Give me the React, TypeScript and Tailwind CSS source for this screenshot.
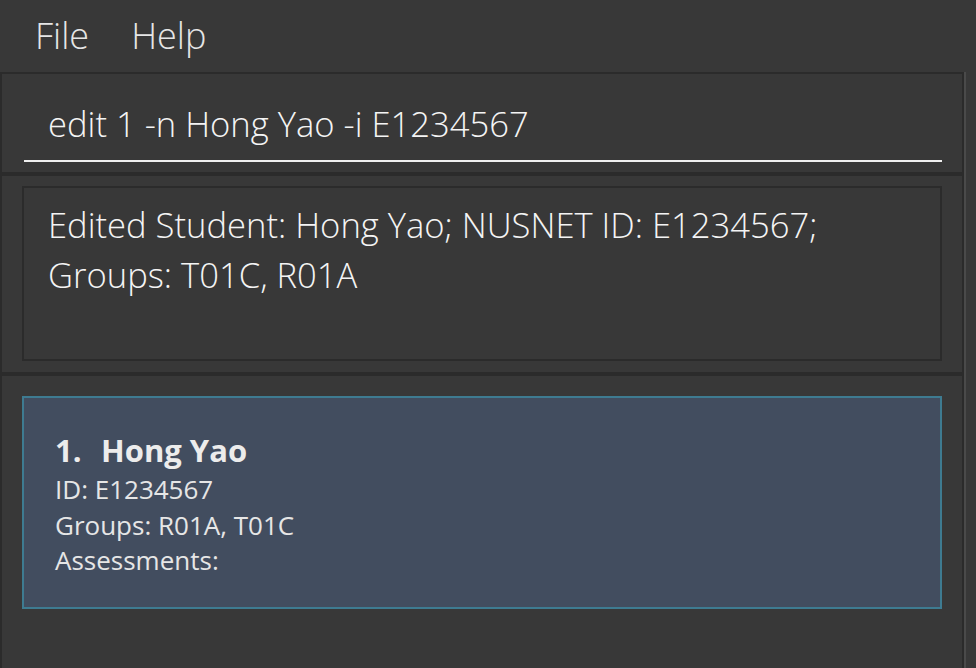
export default function App() {
  return (
    <div
      className="w-[976px] h-[668px] bg-[#383838] flex flex-col overflow-hidden text-white"
      style={{ fontFamily: '"Open Sans", "Noto Sans", sans-serif' }}
    >
      {/* Menu bar */}
      <div className="h-[72px] flex items-center gap-[42px] pl-[35px] text-[36px] font-light text-[#e6e6e6]">
        <span>File</span>
        <span>Help</span>
      </div>

      <div className="flex-1 flex">
        <div className="w-[962px] flex flex-col border-l-2 border-t-2 border-[#2b2b2b]">
          {/* Command box */}
          <div className="h-[98px] px-[20px] pt-[10px]">
            <div className="ml-[2px] h-[78px] flex items-end border-b-2 border-[#f0f0f0] pl-[24px] pb-[12px]">
              <span className="text-[34.6px] leading-[48px] font-light text-[#f4f4f4]">edit 1 -n Hong Yao -i E1234567</span>
            </div>
          </div>

          <div className="h-[4px] bg-[#2b2b2b]" />

          {/* Result display */}
          <div className="h-[196px] px-[20px] pt-[10px] pb-[11px]">
            <div className="h-full border-2 border-[#2b2b2b] pl-[24px] pt-[12px] text-[34.6px] leading-[50px] font-light text-[#f4f4f4]">
              Edited Student: Hong Yao; NUSNET ID: E1234567;
              <br />
              Groups: T01C, R01A
            </div>
          </div>

          <div className="h-[4px] bg-[#2b2b2b]" />

          {/* Student list */}
          <div className="flex-1 px-[20px] pt-[20px]">
            <div className="h-[213px] bg-[#424d5f] border-2 border-[#3e7b91] pl-[31px] pt-[32px]">
              <div className="flex text-[31px] font-bold leading-[40px] text-[#ececec]">
                <span className="w-[46px]">1.</span>
                <span>Hong Yao</span>
              </div>
              <div className="mt-[2px] text-[26px] leading-[35.5px] text-[#e6e6e6]">
                <div>ID: E1234567</div>
                <div>Groups: R01A, T01C</div>
                <div>Assessments:</div>
              </div>
            </div>
          </div>
        </div>

        {/* Divider strip */}
        <div className="w-[2px] bg-[#2b2b2b]" />
        <div className="w-[2px] bg-[#4a4a4a]" />
        <div className="flex-1" />
      </div>
    </div>
  );
}
